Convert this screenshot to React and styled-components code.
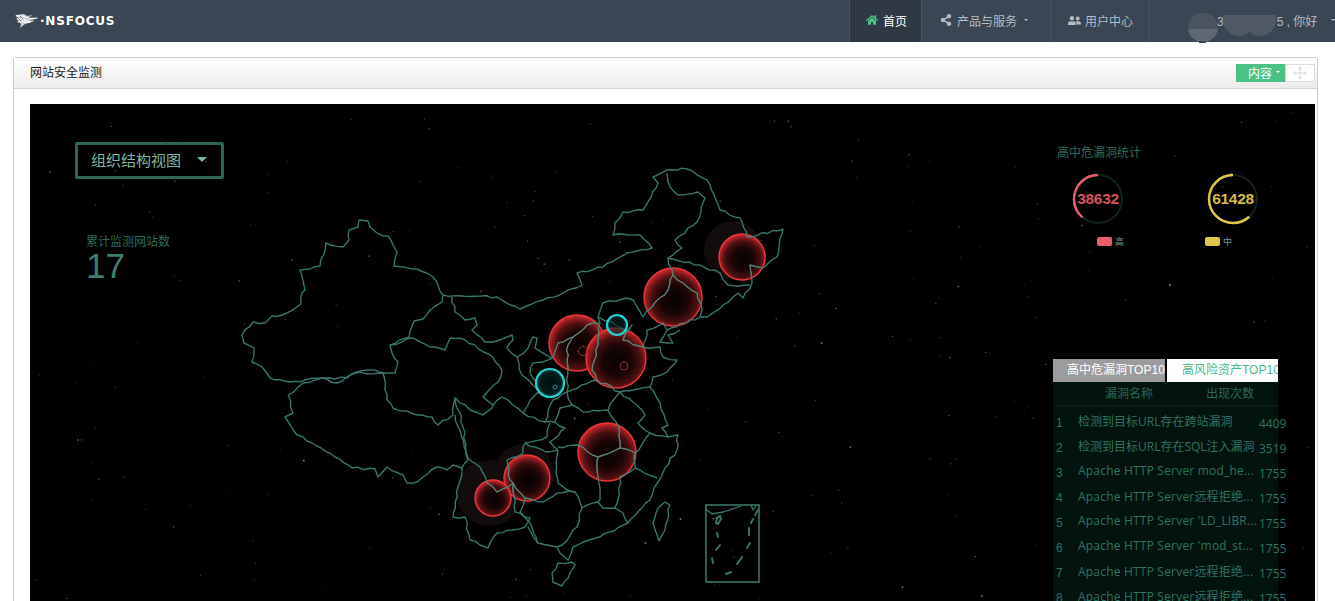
import React from 'react';
import styled, { createGlobalStyle } from 'styled-components';
import { FaHome, FaShareAlt, FaUserFriends } from 'react-icons/fa';
import { Move } from 'lucide-react';

const CJK = '"Liberation Sans", "Noto Sans CJK SC", sans-serif';

const GlobalStyle = createGlobalStyle`
  html, body {
    margin: 0;
    height: 601px;
    overflow: hidden;
    background: #fff;
    font-family: ${CJK};
  }
`;

const Shell = styled.div`
  height: 601px;
  overflow: hidden;
`;

const NavBar = styled.header`
  display: flex;
  align-items: stretch;
  height: 42px;
  background: #3a4653;
`;

const LogoLink = styled.div`
  display: flex;
  align-items: center;
  padding-left: 15px;
  margin-right: auto;
`;

const LogoText = styled.span`
  font-family: "DejaVu Sans", sans-serif;
  font-weight: 700;
  font-size: 12px;
  letter-spacing: 0.8px;
  color: #fff;
`;

const NavItem = styled.a`
  position: relative;
  display: flex;
  align-items: center;
  gap: ${p => p.$gap || 5}px;
  width: ${p => p.$w}px;
  box-sizing: border-box;
  padding: 0 0 2px ${p => p.$pad || 16}px;
  font-size: 12px;
  color: ${p => (p.$active ? '#fff' : '#b4bcc4')};
  background: ${p => (p.$active ? '#2e3944' : 'transparent')};
  border-left: 1px solid #46525e;
  svg { color: ${p => (p.$active ? '#4cc185' : '#b4bcc4')}; flex: none; }
`;

const Caret = styled.i`
  width: 0;
  height: 0;
  border-left: ${p => p.$size || 2}px solid transparent;
  border-right: ${p => p.$size || 2}px solid transparent;
  border-top: ${p => p.$size || 2}px solid ${p => p.$color || '#b4bcc4'};
  margin-left: ${p => p.$left || 6}px;
`;

const UserName = styled.span`
  margin-left: 66px;
  white-space: pre;
`;

const NameGap = styled.i`
  display: inline-block;
  width: 53px;
`;

const MaskRound = styled.span`
  position: absolute;
  top: 13px;
  left: 38px;
  width: 30px;
  height: 29px;
  border-radius: 50%;
  background: linear-gradient(#4a5560 55%, #5e6873 55%);
  &::after {
    content: '';
    position: absolute;
    left: 11px;
    bottom: -1px;
    width: 7px;
    height: 2px;
    background: #3a4653;
  }
`;

const MaskScallop = styled.span`
  position: absolute;
  top: 15px;
  left: ${p => p.$left}px;
  width: 32px;
  height: 21px;
  border-radius: 0 0 16px 16px;
  background: #4e5965;
`;

const Content = styled.main`
  padding: 15px 17px 0 13px;
`;

const Panel = styled.section`
  border: 1px solid #ccc;
  border-bottom: 0;
  border-radius: 3px 3px 0 0;
  background: #fff;
`;

const PanelHead = styled.div`
  display: flex;
  align-items: center;
  justify-content: space-between;
  height: 30px;
  padding: 0 2px 0 16px;
  background: linear-gradient(#fff, #ececec);
  border-bottom: 1px solid #d4d4d4;
`;

const PanelTitle = styled.h3`
  margin: 0 0 3px;
  font-size: 12px;
  font-weight: 400;
  color: #222;
`;

const HeadTools = styled.div`
  display: flex;
  height: 18px;
`;

const ContentButton = styled.button`
  display: flex;
  align-items: center;
  justify-content: flex-end;
  width: 49px;
  padding: 0 5px 2px 0;
  border: 0;
  font: 12px ${CJK};
  color: #fff;
  background: #4cc185;
`;

const MoveButton = styled.button`
  display: flex;
  align-items: center;
  justify-content: center;
  width: 30px;
  padding: 0;
  border: 1px solid #ddd;
  background: #fff;
  color: #bbb;
`;

const PanelBody = styled.div`
  padding: 15px 2px 0 16px;
`;

const MapCanvas = styled.div`
  position: relative;
  height: 497px;
  background: #000;
  overflow: hidden;
`;

const MapSvg = styled.svg`
  display: block;
  width: 1285px;
  height: 497px;
`;

const ViewSelect = styled.div`
  position: absolute;
  top: 38px;
  left: 45px;
  display: flex;
  align-items: center;
  box-sizing: border-box;
  width: 149px;
  height: 37px;
  padding: 0 0 2px 13px;
  border: 3px solid #2e6653;
  border-radius: 2px;
  font-size: 15px;
  color: #7fb5a3;
`;

const TotalBlock = styled.div`
  position: absolute;
  top: 128px;
  left: 56px;
  font-size: 12px;
  color: #2f6b5a;
`;

const TotalValue = styled.div`
  font-size: 35px;
  line-height: 33px;
  color: #3d7f72;
`;

const StatsBlock = styled.div`
  position: absolute;
  top: 39px;
  left: 1027px;
  width: 230px;
`;

const StatsTitle = styled.div`
  font-size: 12px;
  color: #2f6b5a;
`;

const RingRow = styled.div`
  display: grid;
  grid-template-columns: 135px 100px;
  margin: 13px 0 0 15px;
`;

const RingBox = styled.div`
  position: relative;
  width: 52px;
  height: 52px;
`;

const RingValue = styled.span`
  position: absolute;
  inset: 0;
  display: flex;
  align-items: center;
  justify-content: center;
  font-size: 15.5px;
  font-weight: 700;
  letter-spacing: -0.3px;
  color: ${p => p.$color};
`;

const LegendRow = styled.div`
  display: grid;
  grid-template-columns: 108px 60px;
  margin: 10px 0 0 40px;
`;

const LegendItem = styled.div`
  display: flex;
  align-items: center;
  gap: 3px;
  font-size: 9px;
  color: #7d9a90;
`;

const Swatch = styled.i`
  width: 15px;
  height: 9px;
  border-radius: 2px;
  background: ${p => p.$color};
`;

const TopList = styled.div`
  position: absolute;
  top: 255px;
  left: 1023px;
  width: 225px;
  background: #03130e;
`;

const TabRow = styled.div`
  display: grid;
  grid-template-columns: 112px 111px;
  gap: 2px;
  height: 23px;
  background: #000;
`;

const Tab = styled.div`
  overflow: hidden;
  padding-left: ${p => (p.$active ? 14 : 15)}px;
  font-size: 12px;
  line-height: 23px;
  white-space: nowrap;
  color: ${p => (p.$active ? '#fff' : '#4cb98a')};
  background: ${p => (p.$active ? '#9c9c9f' : '#fff')};
`;

const ListHead = styled.div`
  display: grid;
  grid-template-columns: 124px 100px;
  height: 23px;
  font-size: 12px;
  line-height: 25px;
  color: #2a6a58;
  border-bottom: 1px solid #0b241d;
  span:first-child { text-align: right; padding-right: 24px; box-sizing: border-box; }
  span:last-child { padding-left: 29px; }
`;

const ListBody = styled.div`
  padding-top: 3px;
`;

const ListRow = styled.div`
  display: grid;
  grid-template-columns: 25px 181px 30px;
  height: 25px;
  font-size: 12px;
  color: #2d7360;
  white-space: nowrap;
`;

const RowIndex = styled.span`
  padding: 7px 0 0 3px;
`;

const RowName = styled.span`
  padding-top: 3px;
  font-family: "Open Sans", "Noto Sans CJK SC", sans-serif;
  letter-spacing: ${p => (p.$latin ? 0.2 : 0)}px;
  overflow: hidden;
`;

const RowCount = styled.span`
  padding-top: 6px;
  font-family: "Open Sans", sans-serif;
`;

// seeded so the star field stays put between renders
const seeded = seed => {
  let s = seed;
  return () => {
    s = (s * 16807) % 2147483647;
    return (s - 1) / 2147483646;
  };
};

const jag = (pts, seed) => {
  const rnd = seeded(seed);
  const out = [];
  for (let i = 0; i < pts.length - 1; i++) {
    const [x1, y1] = pts[i];
    const [x2, y2] = pts[i + 1];
    out.push(`${x1},${y1}`);
    const len = Math.hypot(x2 - x1, y2 - y1);
    const steps = Math.floor(len / 5);
    for (let k = 1; k < steps; k++) {
      const t = k / steps;
      const off = (rnd() - 0.5) * 2.4;
      const nx = (y2 - y1) / len;
      const ny = (x1 - x2) / len;
      out.push(`${(x1 + (x2 - x1) * t + nx * off).toFixed(1)},${(y1 + (y2 - y1) * t + ny * off).toFixed(1)}`);
    }
  }
  const last = pts[pts.length - 1];
  out.push(`${last[0]},${last[1]}`);
  return out.join(' ');
};

const BORDERS = [
  // xinjiang
  [[359,220],[368,221],[370,227],[377,233],[388,236],[393,245],[397,252],[394,266],[417,269],[433,277],[443,295],[442,302],[430,310],[423,319],[414,321],[409,337],[390,345],[392,353],[398,362],[395,373],[385,373],[370,370],[357,372],[347,378],[323,378],[290,382],[270,378],[262,367],[252,362],[254,348],[244,343],[242,335],[253,322],[265,323],[272,316],[282,315],[301,304],[302,293],[305,290],[300,270],[320,266],[326,243],[343,247],[349,240],[349,230],[358,227],[359,220]],
  // tibet
  [[288,395],[303,383],[322,378],[337,383],[355,373],[383,373],[387,400],[393,408],[417,415],[432,417],[438,425],[453,415],[455,398],[463,427],[468,460],[462,468],[453,465],[447,470],[437,467],[423,477],[417,482],[407,483],[403,475],[387,467],[378,477],[375,469],[352,468],[335,457],[312,443],[297,435],[285,417],[293,413],[288,395]],
  // qinghai
  [[390,345],[413,338],[430,347],[445,350],[450,338],[465,340],[493,357],[502,370],[498,382],[483,397],[493,405],[492,408],[483,415],[470,410],[455,398]],
  // gansu
  [[452,297],[455,312],[465,320],[475,318],[477,325],[472,330],[485,342],[493,342],[512,335],[513,340],[507,348],[517,357],[522,375],[533,385],[540,392],[537,393],[528,405],[523,413],[513,405],[502,397],[493,405]],
  // ningxia
  [[517,357],[528,348],[533,337],[537,338],[535,348],[552,358],[542,362],[533,363],[530,373],[537,382]],
  // inner mongolia and the north east
  [[443,295],[497,297],[520,309],[543,300],[563,293],[582,285],[577,273],[603,267],[627,253],[652,248],[640,235],[613,235],[615,223],[623,212],[643,210],[658,183],[653,177],[667,170],[687,169],[707,180],[720,210],[740,218],[747,237],[783,229],[777,257],[763,268],[750,265],[752,283],[743,298],[738,293],[723,305],[707,317],[700,317],[667,330],[660,342],[673,343],[668,335],[680,330]],
  [[667,173],[668,182],[678,195],[698,192],[705,198],[697,222],[675,240],[682,248],[668,258],[700,265],[720,273],[728,285],[750,285]],
  [[668,258],[673,275],[683,283],[697,293],[702,310],[700,317]],
  [[673,275],[668,290],[652,307],[643,317],[633,300],[627,298],[603,303],[598,317],[600,323],[587,325],[573,337],[558,343],[553,357],[552,358]],
  // hebei, shanxi, henan, shandong coast
  [[598,317],[612,322],[627,332],[632,325],[623,340],[643,347],[647,330],[663,323],[667,330]],
  [[573,337],[568,345],[567,360],[568,368],[567,392]],
  [[600,323],[598,345],[592,370],[597,380],[567,392],[553,400],[545,422]],
  [[643,347],[660,347],[663,357],[677,360],[667,372],[653,377],[650,387],[660,403],[668,425],[662,428],[668,437],[678,435],[677,450],[665,468],[658,482],[650,500],[628,523],[600,537],[573,547],[568,560],[560,553],[557,547],[538,543],[528,527]],
  [[597,380],[620,392],[650,387]],
  [[620,392],[633,402],[645,415],[638,423],[650,433],[635,453]],
  [[650,433],[668,437]],
  [[620,392],[615,398],[608,410],[618,425],[620,448]],
  [[567,392],[572,405],[583,412],[608,410]],
  [[523,413],[545,422],[555,422],[560,408],[572,405]],
  [[555,422],[565,428],[550,442],[558,450],[556,473],[558,483],[567,490],[575,492],[582,508],[598,502],[603,508],[615,508],[623,513],[628,523]],
  [[550,423],[547,437],[525,443]],
  [[558,447],[578,445],[598,457],[620,448],[635,453],[635,468],[620,477],[618,500],[615,508]],
  [[635,468],[640,470],[657,478]],
  [[598,457],[598,477],[600,500],[598,502]],
  [[582,508],[577,527],[562,545],[557,547]],
  [[575,492],[557,493],[543,502],[525,498],[520,512],[530,523],[537,542]],
  // sichuan and yunnan
  [[455,415],[468,458],[480,467],[487,483],[497,492],[513,483],[515,512],[530,518],[525,527],[513,530],[497,533],[488,548],[480,545],[470,540],[465,517],[453,517],[458,487],[462,468]],
  [[525,443],[523,453],[507,460],[510,480],[513,483]],
  [[525,443],[535,447],[546,452],[558,450]],
  [[513,483],[525,498]],
  // hainan and taiwan
  [[552,573],[558,563],[572,562],[575,565],[570,573],[562,586],[553,582],[552,573]],
  [[665,502],[670,505],[665,530],[659,541],[653,523],[658,508],[665,502]]
];

const SEA_DASHES = [
  'M717 518 L720 516 L721 519 L718 524 L716 523 Z',
  'M717 533 L718 537',
  'M720 545 L716 550',
  'M712 558 L713 563',
  'M726 574 L731 572',
  'M737 564 L742 557',
  'M747 548 L750 543',
  'M749 528 L749 535',
  'M751 523 L753 519',
  'M755 515 L758 510'
];

const RED_BUBBLES = [
  { x: 742, y: 257, r: 23, halo: 29, hx: -9, hy: -7 },
  { x: 673, y: 297, r: 29 },
  { x: 577, y: 343, r: 28 },
  { x: 616, y: 358, r: 30 },
  { x: 607, y: 452, r: 29 },
  { x: 527, y: 478, r: 23, halo: 30, hx: -3, hy: -4 },
  { x: 493, y: 498, r: 18, halo: 33, hx: -4, hy: -5 }
];

const TEAL_BUBBLES = [
  { x: 617, y: 325, r: 10 },
  { x: 550, y: 383, r: 14 }
];

const STARS = (() => {
  const rnd = seeded(4711);
  return Array.from({ length: 420 }, () => ({
    x: 30 + rnd() * 1285,
    y: 104 + rnd() * 497,
    o: 0.1 + rnd() * rnd() * 0.55,
    s: rnd() > 0.85 ? 1.6 : 1
  }));
})();

const TOP_ROWS = [
  ['检测到目标URL存在跨站漏洞', 4409],
  ['检测到目标URL存在SQL注入漏洞', 3519],
  ['Apache HTTP Server mod_he...', 1755],
  ['Apache HTTP Server远程拒绝...', 1755],
  ["Apache HTTP Server 'LD_LIBR...", 1755],
  ["Apache HTTP Server 'mod_st...", 1755],
  ['Apache HTTP Server远程拒绝...', 1755],
  ['Apache HTTP Server远程拒绝...', 1755]
];

const LogoMark = () => (
  <svg width="25" height="16" viewBox="0 0 25 16" fill="none" strokeLinecap="round">
    <path d="M1 2 L9 1 L12 3 L18 2 L12 5 L23 5 L14 8 L17 9 L10 11 L5 15 L6 11 L3 8 Z" fill="#c9ced3" />
    <path d="M1 3 Q6 2 10 4 T22 5" stroke="#fff" strokeWidth="1.1" />
    <path d="M2 6 Q7 5 10 7 T18 8" stroke="#fff" strokeWidth="1.1" />
    <path d="M3 9 Q7 8 9 9 T15 9" stroke="#fff" strokeWidth="1.1" />
    <path d="M2 4 L6 8 M5 3 L8 6" stroke="#3a4653" strokeWidth="0.7" />
  </svg>
);

const Ring = ({ value, color, textColor, share }) => {
  const r = 24;
  const len = 2 * Math.PI * r;
  return (
    <RingBox>
      <svg width="52" height="52" viewBox="0 0 52 52">
        <circle cx="26" cy="26" r={r} fill="none" stroke="#10241d" strokeWidth="2" />
        <circle
          cx="26"
          cy="26"
          r={r}
          fill="none"
          stroke={color}
          strokeWidth="2.5"
          strokeDasharray={`${len * share} ${len}`}
          transform="translate(52 0) scale(-1 1) rotate(-90 26 26)"
        />
      </svg>
      <RingValue $color={textColor}>{value}</RingValue>
    </RingBox>
  );
};

const borderLines = BORDERS.map((pts, i) => <polyline key={i} points={jag(pts, 97 + i * 13)} />);

const ChinaMap = () => (
  <MapSvg viewBox="30 104 1285 497">
    <defs>
      <radialGradient id="redBubble" cx="0.52" cy="0.55" r="0.55">
        <stop offset="0%" stopColor="#080202" />
        <stop offset="45%" stopColor="#1a0505" />
        <stop offset="72%" stopColor="#4a0f11" />
        <stop offset="90%" stopColor="#a01e22" />
        <stop offset="100%" stopColor="#d82c30" />
      </radialGradient>
      <radialGradient id="tealBubble">
        <stop offset="0%" stopColor="#021414" />
        <stop offset="75%" stopColor="#053030" />
        <stop offset="100%" stopColor="#0d6a6a" />
      </radialGradient>
      <clipPath id="insideBubbles">
        {RED_BUBBLES.map((b, i) => (
          <circle key={i} cx={b.x} cy={b.y} r={b.r} />
        ))}
      </clipPath>
    </defs>
    {STARS.map((s, i) => (
      <rect key={i} x={s.x} y={s.y} width={s.s} height={s.s} fill="#fff" opacity={s.o} />
    ))}
    {RED_BUBBLES.filter(b => b.halo).map((b, i) => (
      <circle key={i} cx={b.x + b.hx} cy={b.y + b.hy} r={b.halo} fill="#120c0c" />
    ))}
    <g fill="url(#redBubble)" stroke="#e8363a" strokeWidth="1.4">
      {RED_BUBBLES.map((b, i) => (
        <circle key={i} cx={b.x} cy={b.y} r={b.r} />
      ))}
    </g>
    <g fill="none" stroke="#37776a" strokeWidth="1.4" strokeLinejoin="round">
      {borderLines}
    </g>
    <g fill="none" stroke="#6f7a72" strokeWidth="1" strokeLinejoin="round" clipPath="url(#insideBubbles)">
      {borderLines}
    </g>
    <g fill="url(#tealBubble)" fillOpacity="0.6" stroke="#22d3d0" strokeWidth="2.2">
      {TEAL_BUBBLES.map((b, i) => (
        <circle key={i} cx={b.x} cy={b.y} r={b.r} />
      ))}
    </g>
    <g fill="none" stroke="#37776a">
      <rect x="706" y="505" width="53" height="77" strokeWidth="1.6" />
      <path d="M706 509 L712 514 L723 512 L741 506" strokeWidth="1.3" />
      <path d="M751 505 L753 510 L756 506" strokeWidth="1.2" />
      {SEA_DASHES.map((d, i) => (
        <path key={i} d={d} strokeWidth="2" strokeLinecap="round" />
      ))}
    </g>
    <g fill="none" stroke="#8a2c30" strokeWidth="1">
      <circle cx="583" cy="351" r="4.5" />
      <circle cx="624" cy="366" r="4" />
    </g>
    <circle cx="555" cy="387" r="2" fill="none" stroke="#1d8a88" />
  </MapSvg>
);

export default function App() {
  return (
    <Shell>
      <GlobalStyle />
      <NavBar>
        <LogoLink>
          <LogoMark />
          <LogoText>·NSFOCUS</LogoText>
        </LogoLink>
        <NavItem $w={72} $active>
          <FaHome size={12} />
          首页
        </NavItem>
        <NavItem $w={129} $pad={18}>
          <FaShareAlt size={12} />
          产品与服务
          <Caret $left={2} />
        </NavItem>
        <NavItem $w={99} $pad={17} $gap={4}>
          <FaUserFriends size={13} />
          用户中心
        </NavItem>
        <NavItem $w={186} $pad={1} $gap={0}>
          <MaskRound />
          <MaskScallop $left={73} />
          <MaskScallop $left={94} />
          <UserName>3<NameGap />5 , 你好</UserName>
          <Caret $left={9} />
        </NavItem>
      </NavBar>
      <Content>
        <Panel>
          <PanelHead>
            <PanelTitle>网站安全监测</PanelTitle>
            <HeadTools>
              <ContentButton>
                内容
                <Caret $left={4} $color="#fff" />
              </ContentButton>
              <MoveButton>
                <Move size={14} strokeWidth={1} />
              </MoveButton>
            </HeadTools>
          </PanelHead>
          <PanelBody>
            <MapCanvas>
              <ChinaMap />
              <ViewSelect>
                组织结构视图
                <Caret $left={16} $size={5} $color="#7fb5a3" />
              </ViewSelect>
              <TotalBlock>
                累计监测网站数
                <TotalValue>17</TotalValue>
              </TotalBlock>
              <StatsBlock>
                <StatsTitle>高中危漏洞统计</StatsTitle>
                <RingRow>
                  <Ring value={38632} color="#e4606c" textColor="#d6505e" share={0.386} />
                  <Ring value={61428} color="#e0c64a" textColor="#d6bb45" share={0.614} />
                </RingRow>
                <LegendRow>
                  <LegendItem>
                    <Swatch $color="#e4606c" />高
                  </LegendItem>
                  <LegendItem>
                    <Swatch $color="#e0c64a" />中
                  </LegendItem>
                </LegendRow>
              </StatsBlock>
              <TopList>
                <TabRow>
                  <Tab $active>高中危漏洞TOP10</Tab>
                  <Tab>高风险资产TOP10</Tab>
                </TabRow>
                <ListHead>
                  <span>漏洞名称</span>
                  <span>出现次数</span>
                </ListHead>
                <ListBody>
                  {TOP_ROWS.map(([name, count], i) => (
                    <ListRow key={i}>
                      <RowIndex>{i + 1}</RowIndex>
                      <RowName $latin={i > 1}>{name}</RowName>
                      <RowCount>{count}</RowCount>
                    </ListRow>
                  ))}
                </ListBody>
              </TopList>
            </MapCanvas>
          </PanelBody>
        </Panel>
      </Content>
    </Shell>
  );
}
